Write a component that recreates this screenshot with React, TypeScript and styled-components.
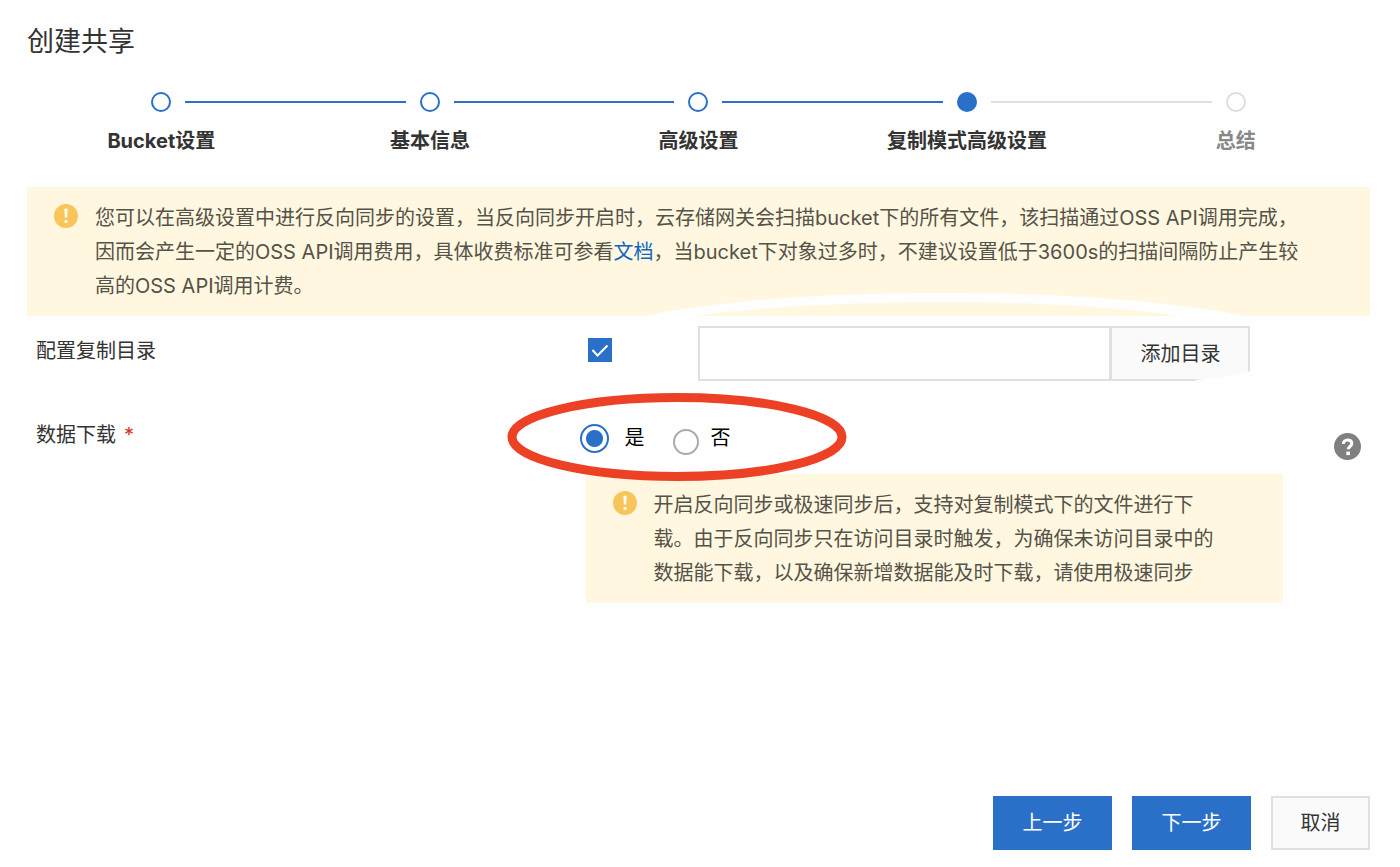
import React from "react";
import styled, { createGlobalStyle } from "styled-components";

const color = {
  blue: "#2b70c8",
  link: "#0f66c0",
  text: "#333333",
  note: "#555249",
  line: "#e0e0e0",
  noteBg: "#fff7df",
  amber: "#f8c55b",
  red: "#ec4125",
};

const GlobalStyle = createGlobalStyle`
  * { box-sizing: border-box; }
  body {
    margin: 0;
    background: #fefefe;
    color: ${color.text};
    font-family: Inter, "Noto Sans CJK SC", sans-serif;
    font-size: 20px;
    line-height: 34px;
  }
`;

const Page = styled.div`
  display: flex;
  flex-direction: column;
  min-height: 100vh;
  padding: 22px 30px 17px 27px;
`;

const Title = styled.h1`
  margin: 0;
  font-size: 27px;
  font-weight: 400;
  line-height: 40px;
`;

const Steps = styled.ol`
  display: flex;
  margin: 0;
  padding: 30px 0 0;
  list-style: none;
`;

const Step = styled.li<{ $pending?: boolean }>`
  flex: 1;
  text-align: center;
  font-weight: 700;
  color: ${(p) => (p.$pending ? "#888888" : color.text)};
`;

const StepHead = styled.div`
  display: flex;
  align-items: center;
  gap: 14px;
  margin-bottom: 12px;
`;

type LineState = "done" | "pending" | "none";

const StepLine = styled.span<{ $state: LineState }>`
  flex: 1;
  height: 2px;
  background: ${(p) =>
    p.$state === "done" ? color.blue : p.$state === "pending" ? color.line : "transparent"};
`;

const StepDot = styled.span<{ $state: "done" | "current" | "pending" }>`
  width: 20px;
  height: 20px;
  border: 2px solid ${(p) => (p.$state === "pending" ? "#dddddd" : color.blue)};
  border-radius: 50%;
  background: ${(p) => (p.$state === "current" ? color.blue : "#ffffff")};
`;

const Note = styled.div`
  display: flex;
  gap: 17px;
  padding: 14px 40px 13px 27px;
  background: ${color.noteBg};
  color: ${color.note};
`;

const TopNote = styled(Note)`
  margin-top: 29px;
`;

const NoteIcon = styled.svg`
  flex: none;
  width: 24px;
  height: 24px;
  margin-top: 3px;
`;

const NoteText = styled.p`
  margin: 0;
`;

const Link = styled.a`
  color: ${color.link};
  text-decoration: none;
`;

const Row = styled.div`
  position: relative;
  display: grid;
  grid-template-columns: 5fr 1fr 6fr;
`;

const DirectoryRow = styled(Row)`
  align-items: start;
  padding-top: 10px;
`;

const DownloadRow = styled(Row)`
  grid-template-columns: 5fr 7fr;
  padding-top: 37px;
`;

const Label = styled.label`
  padding: 8px 9px;
`;

const GroupLabel = styled.div`
  padding: 0 9px;
`;

const Required = styled.span`
  margin-left: 8px;
  color: #d93026;
`;

const CheckBox = styled.span`
  display: grid;
  width: 24px;
  height: 24px;
  margin: 12px 0 0 1px;
  > * {
    grid-area: 1 / 1;
  }
`;

const CheckInput = styled.input`
  appearance: none;
  width: 24px;
  height: 24px;
  margin: 0;
  border: 1px solid #c4c6cf;
  background: #ffffff;
  &:checked {
    border-color: ${color.blue};
    background: ${color.blue};
  }
`;

const CheckMark = styled.svg`
  width: 24px;
  height: 24px;
  pointer-events: none;
  input:not(:checked) + & {
    visibility: hidden;
  }
`;

const PathGroup = styled.div`
  display: flex;
  width: 552px;
  max-width: 100%;
`;

const PathInput = styled.input`
  flex: 1;
  min-width: 0;
  height: 55px;
  padding: 0 16px;
  border: 2px solid ${color.line};
  background: #ffffff;
  font: inherit;
  color: inherit;
`;

const Button = styled.button<{ $primary?: boolean }>`
  width: ${(p) => (p.$primary ? 119 : 99)}px;
  height: 54px;
  padding: 0;
  border: 2px solid ${(p) => (p.$primary ? color.blue : color.line)};
  background: ${(p) => (p.$primary ? color.blue : "#fafafa")};
  color: ${(p) => (p.$primary ? "#ffffff" : color.text)};
  font: inherit;
  white-space: nowrap;
`;

const AddButton = styled(Button)`
  width: 139px;
  height: 55px;
  border-left-width: 1px;
`;

const FieldHead = styled.div`
  display: flex;
  align-items: center;
  justify-content: space-between;
  height: 56px;
  padding-right: 9px;
`;

const RadioGroup = styled.div`
  position: relative;
  display: flex;
  align-self: flex-start;
  align-items: center;
  gap: 28px;
  height: 40px;
  margin-left: -7px;
`;

const RadioLabel = styled.label`
  display: flex;
  align-items: center;
  color: #000000;
`;

const RadioInput = styled.input`
  appearance: none;
  width: 26px;
  height: 26px;
  margin: 8px 12px 0 0;
  border: 2px solid #aaaaaa;
  border-radius: 50%;
  background: #ffffff;
  &:checked {
    width: 29px;
    height: 29px;
    margin: 0 16px 0 0;
    border-color: ${color.blue};
    background: radial-gradient(circle, ${color.blue} 8px, #ffffff 9px);
  }
`;

const HelpButton = styled.button`
  display: flex;
  padding: 0;
  border: 0;
  background: none;
`;

const FieldNote = styled(Note)`
  width: 697px;
  max-width: 100%;
  margin-left: -1px;
`;

const RingMark = styled.svg`
  position: absolute;
  top: -26px;
  left: -73px;
  width: 340px;
  height: 90px;
  pointer-events: none;
`;

const Sweep = styled.svg`
  position: absolute;
  top: -24px;
  left: 50%;
  width: 700px;
  height: 92px;
  margin-left: -99px;
  pointer-events: none;
`;

const Footer = styled.footer`
  display: flex;
  justify-content: flex-end;
  gap: 20px;
  margin-top: auto;
`;

function WarningIcon() {
  return (
    <NoteIcon viewBox="0 0 24 24" aria-hidden="true">
      <circle cx="12" cy="12" r="12" fill={color.amber} />
      <path d="M10.4 4.8h3.2l-.4 8.800h-2.400z" fill="#fffdf6" />
      <rect x="10.500" y="16" width="3" height="3" rx=".8" fill="#fffdf6" />
    </NoteIcon>
  );
}

const steps = ["Bucket设置", "基本信息", "高级设置", "复制模式高级设置", "总结"];
const current = 3;

function lineState(index: number): LineState {
  if (index < 0 || index >= steps.length - 1) return "none";
  return index < current ? "done" : "pending";
}

export default function App() {
  return (
    <>
      <GlobalStyle />
      <Page>
        <Title>创建共享</Title>
        <Steps>
          {steps.map((name, i) => (
            <Step key={name} $pending={i > current} aria-current={i === current ? "step" : undefined}>
              <StepHead>
                <StepLine $state={lineState(i - 1)} />
                <StepDot $state={i < current ? "done" : i === current ? "current" : "pending"} />
                <StepLine $state={lineState(i)} />
              </StepHead>
              {name}
            </Step>
          ))}
        </Steps>

        <TopNote>
          <WarningIcon />
          <NoteText>
            您可以在高级设置中进行反向同步的设置，当反向同步开启时，云存储网关会扫描bucket下的所有文件，该扫描通过OSS API调用完成，
            <br />
            因而会产生一定的OSS API调用费用，具体收费标准可参看<Link href="#doc">文档</Link>
            ，当bucket下对象过多时，不建议设置低于3600s的扫描间隔防止产生较
            <br />
            高的OSS API调用计费。
          </NoteText>
        </TopNote>

        <DirectoryRow>
          <Label htmlFor="copy-dir">配置复制目录</Label>
          <CheckBox>
            <CheckInput id="copy-dir" type="checkbox" defaultChecked />
            <CheckMark viewBox="0 0 24 24" aria-hidden="true">
              <path d="M4.5 12l5 5.500L19.500 7.500" fill="none" stroke="#ffffff" strokeWidth="2" />
            </CheckMark>
          </CheckBox>
          <PathGroup>
            <PathInput type="text" aria-label="目录" />
            <AddButton type="button">添加目录</AddButton>
          </PathGroup>
          <Sweep viewBox="0 0 700 92" aria-hidden="true">
            <path
              d="M10 33 C70 14 190 1 343 1 C470 1 590 10 675 30 L600 28 C550 18 460 10 343 10 C240 10 140 16 78 27 Z"
              fill="#fefefe"
            />
            <path d="M596 88 C615 86 636 83 655 78 V86 H651 V90 H596 Z" fill="#fefefe" />
          </Sweep>
        </DirectoryRow>

        <DownloadRow>
          <GroupLabel id="download-label">
            数据下载<Required>*</Required>
          </GroupLabel>
          <div>
            <FieldHead>
              <RadioGroup role="radiogroup" aria-labelledby="download-label">
                <RadioLabel>
                  <RadioInput type="radio" name="download" defaultChecked />是
                </RadioLabel>
                <RadioLabel>
                  <RadioInput type="radio" name="download" />否
                </RadioLabel>
                <RingMark viewBox="0 0 340 90" aria-hidden="true">
                  <ellipse cx="170" cy="45" rx="165" ry="39.500" fill="none" stroke={color.red} strokeWidth="9" />
                </RingMark>
              </RadioGroup>
              <HelpButton type="button" aria-label="帮助">
                <svg width="27" height="27" viewBox="0 0 27 27" aria-hidden="true">
                  <circle cx="13.500" cy="13.500" r="13.500" fill="#808080" />
                  <path
                    d="M9.300 11c0-2.400 1.700-4.100 4.300-4.100 2.500 0 4.200 1.400 4.200 3.600 0 3-3.600 3-3.600 5.800"
                    fill="none"
                    stroke="#ffffff"
                    strokeWidth="3"
                  />
                  <rect x="12.300" y="18.600" width="3.600" height="3.500" fill="#ffffff" />
                </svg>
              </HelpButton>
            </FieldHead>
            <FieldNote>
              <WarningIcon />
              <NoteText>
                开启反向同步或极速同步后，支持对复制模式下的文件进行下
                <br />
                载。由于反向同步只在访问目录时触发，为确保未访问目录中的
                <br />
                数据能下载，以及确保新增数据能及时下载，请使用极速同步
              </NoteText>
            </FieldNote>
          </div>
        </DownloadRow>

        <Footer>
          <Button $primary type="button">上一步</Button>
          <Button $primary type="button">下一步</Button>
          <Button type="button">取消</Button>
        </Footer>
      </Page>
    </>
  );
}
